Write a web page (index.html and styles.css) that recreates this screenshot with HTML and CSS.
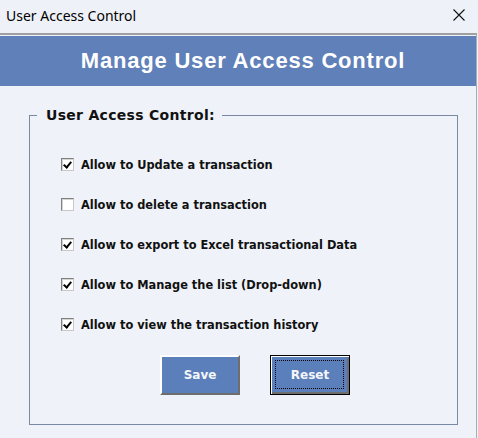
FILE: index.html
```html
<!DOCTYPE html>
<html lang="en">
<head>
    <meta charset="UTF-8">
    <meta name="viewport" content="width=device-width, initial-scale=1.0">
    <title>User Access Control</title>
    <link rel="stylesheet" href="styles.css">
</head>
<body>

    <div class="titlebar">
        <span class="title">User Access Control</span>
        <svg class="close" width="12" height="12" viewBox="0 0 12 12">
            <path d="M0.5 0.5 L11.5 11.5 M11.5 0.5 L0.5 11.5" stroke="#111" stroke-width="1.1" fill="none"/>
        </svg>
    </div>

    <section class="form">
        <div class="header">
            <h1>Manage User Access Control</h1>
        </div>

        <div class="content">
            <fieldset class="access">
                <legend>User Access Control:</legend>

                <ul class="options">
                    <li><span class="check on"></span>Allow to Update a transaction</li>
                    <li><span class="check"></span>Allow to delete a transaction</li>
                    <li><span class="check on"></span>Allow to export to Excel transactional Data</li>
                    <li><span class="check on"></span>Allow to Manage the list (Drop-down)</li>
                    <li><span class="check on"></span>Allow to view the transaction history</li>
                </ul>

                <div class="buttons">
                    <button class="btn save">Save</button>
                    <button class="btn reset">Reset</button>
                </div>
            </fieldset>
        </div>
    </section>

</body>
</html>
```

FILE: styles.css
```css
* {
    margin: 0;
    padding: 0;
    box-sizing: border-box;
}

body {
    width: 478px;
    height: 438px;
    background-color: #eef2f8;
    overflow: hidden;
    font-family: "DejaVu Sans", Tahoma, sans-serif;
}

.titlebar {
    height: 33px;
    display: flex;
    align-items: center;
    justify-content: space-between;
    padding: 0 13px 0 6px;
    background-color: #eef2f8;
}

.titlebar .title {
    font-family: "Noto Sans", sans-serif;
    font-size: 14px;
    color: #000;
    padding-bottom: 3px;
}

.titlebar .close {
    margin-bottom: 4px;
}

section.form {
    width: 477px;
    height: 405px;
    border-top: 2px solid #a0a0a0;
    border-right: 1px solid #a8adb5;
    background-color: #eff3f9;
    padding-top: 1px;
}

.header {
    height: 50px;
    background-color: #5f80b8;
    display: flex;
    align-items: center;
    justify-content: center;
}

.header h1 {
    color: #fff;
    font-family: "Liberation Sans", Arial, sans-serif;
    font-size: 22px;
    letter-spacing: 0.8px;
    font-weight: bold;
    padding-left: 10px;
}

.content {
    padding: 21px 0 0 29px;
}

fieldset.access {
    width: 429px;
    height: 318px;
    border: 1px solid #7a8aa2;
    padding: 35px 0 0 31px;
}

fieldset.access legend {
    margin-left: -24px;
    padding: 0 7px 0 9px;
    font-size: 14px;
    letter-spacing: 0.3px;
    font-weight: bold;
    line-height: 16px;
    color: #111;
}

ul.options {
    list-style: none;
    display: flex;
    flex-direction: column;
    gap: 27px;
}

ul.options li {
    display: flex;
    align-items: center;
    height: 13px;
    font-size: 11.4px;
    font-weight: bold;
    color: #111;
}

.check {
    width: 13px;
    height: 13px;
    margin-right: 7px;
    background-color: #fff;
    border-top: 1px solid #808080;
    border-left: 1px solid #808080;
    border-right: 1px solid #c8c8c8;
    border-bottom: 1px solid #c8c8c8;
    box-shadow: inset 1px 1px 0 #d4d4d4;
    position: relative;
}

.check.on::after {
    content: "";
    position: absolute;
    left: 3px;
    top: 1px;
    width: 3px;
    height: 6px;
    border-right: 2px solid #000;
    border-bottom: 2px solid #000;
    transform: rotate(40deg);
}

.buttons {
    display: flex;
    gap: 30px;
    margin: 24px 0 0 99px;
}

.btn {
    width: 80px;
    height: 40px;
    background-color: #5b7fbb;
    color: #f4f6fa;
    font-family: "DejaVu Sans", Tahoma, sans-serif;
    font-size: 12px;
    font-weight: bold;
    cursor: pointer;
    outline: none;
}

.btn.save {
    border-top: 2px solid #ffffff;
    border-left: 2px solid #ffffff;
    border-right: 2px solid #6e6e6e;
    border-bottom: 2px solid #6e6e6e;
}

.btn.reset {
    border: 1px solid #000;
    box-shadow: inset 1px 1px 0 #fff, inset -2px -2px 0 #6e6e6e;
    position: relative;
}

.btn.reset::after {
    content: "";
    position: absolute;
    left: 4px;
    top: 4px;
    right: 5px;
    bottom: 5px;
    border: 1px dotted #000;
}
```
